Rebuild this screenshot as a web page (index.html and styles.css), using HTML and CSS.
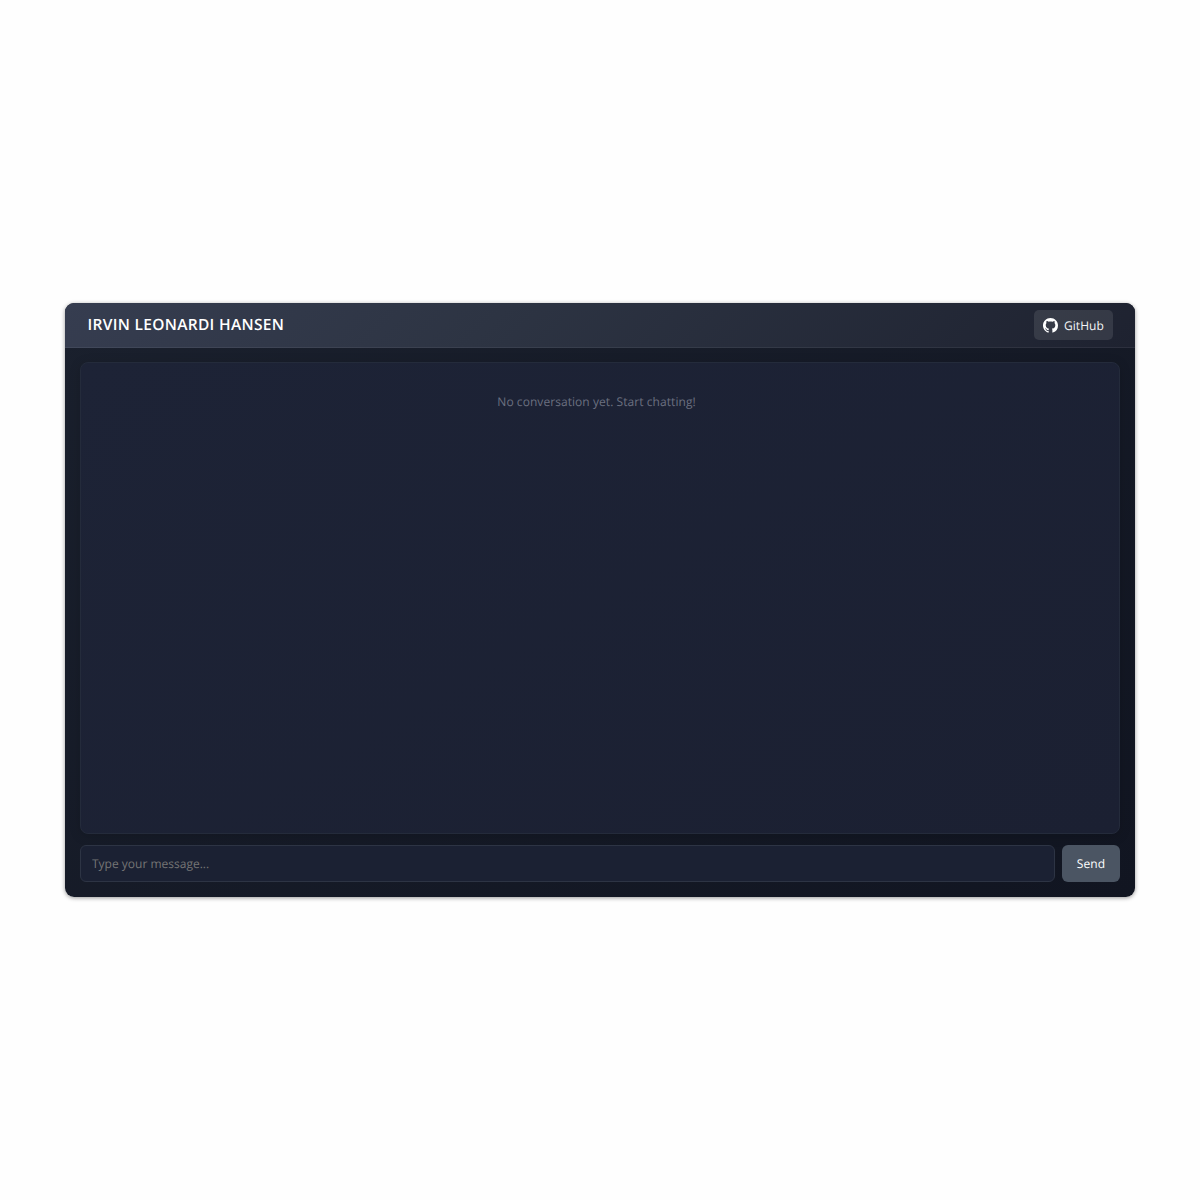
FILE: index.html
```html
<!DOCTYPE html>
<html lang="en">
<head>
<meta charset="utf-8">
<title>Chat</title>
<link rel="stylesheet" href="styles.css">
</head>
<body>
<main class="window">
  <header class="header">
    <h1 class="title">IRVIN LEONARDI HANSEN</h1>
    <a class="github" href="#">
      <svg class="github-icon" viewBox="0 0 16 16" aria-hidden="true"><path fill="currentColor" d="M8 0C3.58 0 0 3.58 0 8c0 3.54 2.29 6.53 5.47 7.59.4.07.55-.17.55-.38 0-.19-.01-.82-.01-1.49-2.01.37-2.53-.49-2.69-.94-.09-.23-.48-.94-.82-1.13-.28-.15-.68-.52-.01-.53.63-.01 1.08.58 1.23.82.72 1.21 1.87.87 2.33.66.07-.52.28-.87.51-1.07-1.78-.2-3.64-.89-3.64-3.95 0-.87.31-1.59.82-2.15-.08-.2-.36-1.02.08-2.12 0 0 .67-.21 2.2.82.64-.18 1.32-.27 2-.27s1.36.09 2 .27c1.53-1.04 2.2-.82 2.2-.82.44 1.1.16 1.92.08 2.12.51.56.82 1.27.82 2.15 0 3.07-1.87 3.75-3.65 3.95.29.25.54.73.54 1.48 0 1.07-.01 1.93-.01 2.2 0 .21.15.46.55.38A8.01 8.01 0 0 0 16 8c0-4.42-3.58-8-8-8z"/></svg>
      <span>GitHub</span>
    </a>
  </header>
  <section class="body">
    <div class="messages"><p class="empty">No conversation yet. Start chatting!</p></div>
    <form class="composer">
      <input class="field" type="text" placeholder="Type your message...">
      <button class="send" type="button">Send</button>
    </form>
  </section>
</main>
</body>
</html>
```
FILE: styles.css
```css
* { box-sizing: border-box; }

body {
  margin: 0;
  height: 1200px;
  display: flex;
  align-items: center;
  justify-content: center;
  background: #fefefe;
  font-family: "Open Sans", sans-serif;
  font-size: 12px;
  letter-spacing: 0.06px;
  text-rendering: geometricPrecision;
}

.window {
  width: 1070px;
  height: 594px;
  display: flex;
  flex-direction: column;
  border-radius: 9px;
  overflow: hidden;
  background: linear-gradient(145deg, #1a202d, #111521);
  box-shadow: 0 1px 4px rgba(0, 0, 0, 0.4);
}

.header {
  height: 45px;
  flex: none;
  display: flex;
  align-items: center;
  justify-content: space-between;
  padding: 0 22px;
  background: linear-gradient(135deg, #363d50, #2d3443 40%, #1e2230);
  border-bottom: 1px solid rgba(255, 255, 255, 0.06);
}

.title {
  margin: 0;
  color: #fff;
  font-size: 15.5px;
  line-height: 20px;
  padding: 0 0 2px 0.6px;
  font-weight: 600;
  letter-spacing: 0.3px;
}

.github {
  width: 79px;
  height: 30px;
  display: flex;
  align-items: center;
  gap: 6px;
  padding: 0 9px;
  border-radius: 5px;
  background: rgba(255, 255, 255, 0.1);
  color: #f4f5f7;
  text-decoration: none;
}

.github-icon {
  flex: none;
  width: 15px;
  height: 15px;
  color: #fff;
}

.body {
  flex: 1;
  display: flex;
  flex-direction: column;
  gap: 11px;
  padding: 14px 15px 15px;
}

.messages {
  flex: 1;
  padding: 30px 22px 0 15px;
  border: 1px solid #242b3b;
  border-radius: 8px;
  background: linear-gradient(150deg, #1d2336, #1b2032);
  box-shadow: 0 2px 12px rgba(0, 0, 0, 0.15);
}

.empty {
  margin: 0;
  color: #6b7080;
  text-align: center;
}

.composer {
  display: flex;
  gap: 7px;
  height: 37px;
}

.field {
  flex: 1;
  min-width: 0;
  padding: 0 11px;
  border: 1px solid #2d3444;
  border-radius: 6px;
  background: #1b2133;
  color: #fff;
  font: inherit;
  letter-spacing: 0;
  text-rendering: inherit;
}

.field::placeholder { color: #757575; }

.send {
  width: 58px;
  padding: 0;
  border: 0;
  border-radius: 6px;
  background: #4b5563;
  color: #fff;
  font: inherit;
  letter-spacing: inherit;
  text-rendering: inherit;
}
```
